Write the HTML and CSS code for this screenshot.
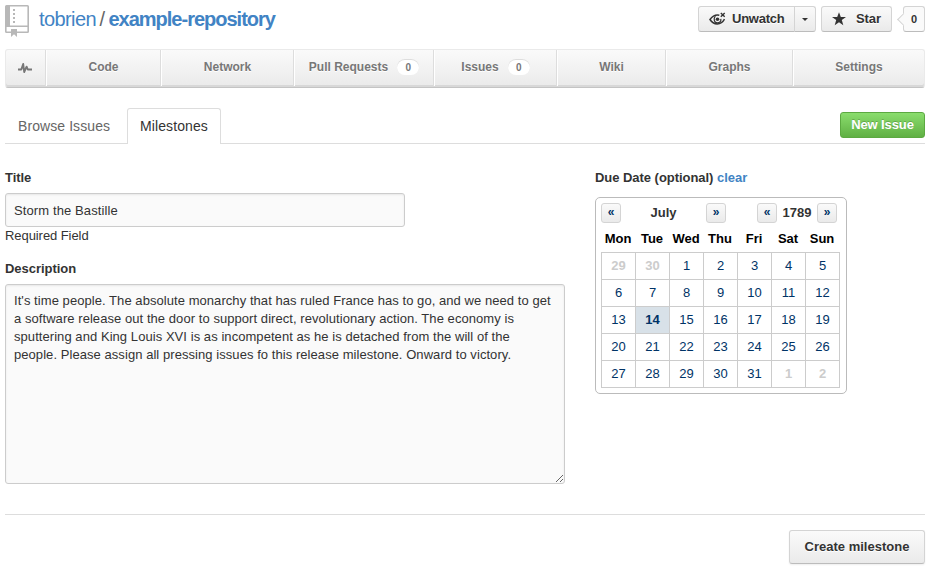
FILE: index.html
```html
<!DOCTYPE html>
<html lang="en">
<head>
<meta charset="utf-8">
<title>tobrien/example-repository</title>
<link rel="stylesheet" href="styles.css">
</head>
<body>
<header class="repohead">
  <svg class="repo-icon" width="24" height="32" viewBox="0 0 24 32">
    <path fill="#b8b8b8" fill-rule="evenodd" d="M1.500 0H22.500Q24 0 24 1.500V26.500Q24 28 22.500 28H12V32L9 29.300L6 32V28H1.500Q0 28 0 26.500V1.500Q0 0 1.500 0ZM5 1.600V20.500H22.400V1.600ZM1.600 22V26.400H6V24H12V26.400H22.400V22Z"/>
    <path fill="#b8b8b8" d="M8 4h2v2H8zM8 8h2v2H8zM8 12h2v2H8zM8 16h2v2H8z"/>
  </svg>
  <h1 class="repo-title"><a class="owner">tobrien</a><span class="slash">/</span><a class="repo">example-repository</a></h1>
  <div class="actions">
    <div class="split">
      <button class="btn unwatch">
        <svg width="17" height="15" viewBox="0 0 17 15"><g fill="none" stroke="#333" stroke-width="1.500"><path d="M10.300 3.300C6.300 2.500 3.200 4.500 1 7.500C4.600 13.300 12 13.500 15.500 7.200"/><path stroke-width="1.200" d="M6.400 4.200C4.200 6.500 5 10.800 8.400 10.800C11 10.800 12.300 8.900 11.800 6.800"/><path stroke-width="1.400" d="M11.800 1.100L15.700 4.700M15.700 1.100L11.800 4.700"/></g><circle cx="8.500" cy="7.200" r="1.800" fill="#333"/></svg>
        <span>Unwatch</span></button>
      <button class="btn caret"><i></i></button>
    </div>
    <button class="btn star">
      <svg width="14" height="14" viewBox="0 0 14 14"><path fill="#333" d="M7 .3L8.800 5H14L9.800 8.100L11.300 13.300L7 10.200L2.700 13.300L4.200 8.100L0 5H5.200Z"/></svg>
      <span>Star</span></button>
    <span class="count">0</span>
  </div>
</header>
<nav class="nav">
  <a class="pulse"><svg width="15" height="12" viewBox="0 0 15 12"><path fill="none" stroke="#777" stroke-width="1.900" stroke-linejoin="round" d="M0 7.500H3.300L5.200 2L6.200 10L8.600 4.700L9.800 7.500H14"/></svg></a>
  <a class="code">Code</a>
  <a class="network">Network</a>
  <a class="pulls">Pull Requests<span class="badge">0</span></a>
  <a class="issues">Issues<span class="badge">0</span></a>
  <a class="wiki">Wiki</a>
  <a class="graphs">Graphs</a>
  <a class="settings">Settings</a>
</nav>
<div class="tabs">
  <a class="tab browse">Browse Issues</a>
  <a class="tab active">Milestones</a>
  <button class="new-issue">New Issue</button>
</div>
<main class="form">
  <div class="fields">
    <label class="label" for="title">Title</label>
    <input class="input" id="title" value="Storm the Bastille">
    <p class="note">Required Field</p>
    <label class="label desc-label" for="desc">Description</label>
    <textarea class="input area" id="desc" spellcheck="false">It's time people. The absolute monarchy that has ruled France has to go, and we need to get
a software release out the door to support direct, revolutionary action. The economy is
sputtering and King Louis XVI is as incompetent as he is detached from the will of the
people. Please assign all pressing issues fo this release milestone. Onward to victory.</textarea>
  </div>
  <div class="due">
    <div class="label due-label">Due Date (optional) <a class="clear">clear</a></div>
    <div class="calendar">
      <div class="cal-head">
        <button class="step">«</button><b class="month">July</b><button class="step">»</button>
        <button class="step prev-year">«</button><b class="year">1789</b><button class="step">»</button>
      </div>
      <div class="weekdays"><b>Mon</b><b>Tue</b><b>Wed</b><b>Thu</b><b>Fri</b><b>Sat</b><b>Sun</b></div>
      <div class="days">
        <span class="out">29</span><span class="out">30</span><span>1</span><span>2</span><span>3</span><span>4</span><span>5</span>
        <span>6</span><span>7</span><span>8</span><span>9</span><span>10</span><span>11</span><span>12</span>
        <span>13</span><span class="selected">14</span><span>15</span><span>16</span><span>17</span><span>18</span><span>19</span>
        <span>20</span><span>21</span><span>22</span><span>23</span><span>24</span><span>25</span><span>26</span>
        <span>27</span><span>28</span><span>29</span><span>30</span><span>31</span><span class="out">1</span><span class="out">2</span>
      </div>
    </div>
  </div>
</main>
<footer class="foot"><button class="btn create">Create milestone</button></footer>
</body>
</html>
```
FILE: styles.css
```css
* { box-sizing: border-box; }
body {
  margin: 0;
  padding: 0 11px 0 5px;
  width: 936px;
  height: 570px;
  overflow: hidden;
  background: #fff;
  color: #333;
  font: 13px/18px "Liberation Sans", Helvetica, Arial, sans-serif;
}
button, input, textarea { font: inherit; color: inherit; margin: 0; }
button { padding: 0; white-space: nowrap; }
.repohead { display: flex; height: 49px; padding-top: 5px; }
.repo-icon { flex: none; }
.repo-title { margin: 0 0 0 10px; font-size: 20px; line-height: 29px; font-weight: 400; letter-spacing: -.6px; white-space: nowrap; }
.repo-title a { color: #4183c4; }
.repo-title .slash { margin: 0 4px 0 3.5px; color: #666; }
.repo-title .repo { font-weight: 700; letter-spacing: -1px; }
.actions { display: flex; margin-left: auto; padding-top: 1px; }
.btn {
  display: flex;
  align-items: center;
  height: 26px;
  border: 1px solid #d4d4d4;
  border-bottom-color: #bcbcbc;
  border-radius: 3px;
  background: linear-gradient(#fafafa, #eaeaea);
  color: #333;
  font-weight: 700;
  text-shadow: 0 1px 0 #fff;
}
.split { display: flex; }
.unwatch { width: 97px; padding-left: 10px; gap: 6px; border-radius: 3px 0 0 3px; letter-spacing: -.25px; }
.unwatch svg, .star svg { flex: none; }
.caret { width: 22px; margin-left: -1px; justify-content: center; border-radius: 0 3px 3px 0; }
.caret i { border: 3px solid transparent; border-top-color: #333; border-bottom: 0; }
.star { width: 71px; margin-left: 5px; padding-left: 10px; gap: 10px; letter-spacing: -.1px; }
.count {
  position: relative;
  width: 22px;
  height: 26px;
  margin-left: 11px;
  border: 1px solid #d4d4d4;
  border-bottom-color: #bcbcbc;
  border-radius: 3px;
  background: #fafafa;
  font-size: 11px;
  font-weight: 700;
  line-height: 24px;
  text-align: center;
}
.count::before {
  content: "";
  position: absolute;
  left: -5px;
  top: 8px;
  width: 8px;
  height: 8px;
  border: solid #d4d4d4;
  border-width: 0 0 1px 1px;
  background: #fafafa;
  transform: rotate(45deg);
}
.nav {
  display: flex;
  height: 39px;
  border: 1px solid #eaeaea;
  border-bottom: 1px solid #c4c4c4;
  border-radius: 3px;
  background: linear-gradient(#fafafa, #eaeaea);
  box-shadow: inset 0 -2px 0 #d8d8d8;
  color: #777;
  font-size: 12px;
  font-weight: 700;
  text-shadow: 0 1px 0 #fff;
}
.nav a {
  display: flex;
  justify-content: center;
  height: 36px;
  padding-top: 8px;
  border-right: 1px solid #ddd;
  border-left: 1px solid #fff;
  white-space: nowrap;
}
.nav a:first-child { border-left: 0; }
.nav a:last-child { border-right: 0; flex: 1; }
.nav .pulse { width: 40px; padding-top: 12px; }
.nav .code { width: 115px; }
.nav .network { width: 133px; }
.nav .pulls { width: 140px; }
.nav .issues { width: 123px; }
.nav .wiki { width: 109px; }
.nav .graphs { width: 127px; }
.badge {
  width: 22px;
  height: 16px;
  margin: 1px 0 0 9px;
  border-radius: 8px;
  background: #fff;
  box-shadow: inset 0 1px 0 #ddd;
  font-size: 10px;
  line-height: 17px;
  text-align: center;
}
.tabs { display: flex; height: 36px; margin-top: 20px; border-bottom: 1px solid #ddd; font-size: 14px; }
.tab { height: 36px; line-height: 36px; white-space: nowrap; }
.browse { width: 122px; padding-left: 13px; color: #666; letter-spacing: .08px; }
.active {
  width: 94px;
  border: 1px solid #ddd;
  border-bottom: 0;
  border-radius: 3px 3px 0 0;
  background: #fff;
  line-height: 34px;
  text-align: center;
  letter-spacing: .1px;
}
.new-issue {
  width: 85px;
  height: 26px;
  margin: 4px 0 0 auto;
  border: 1px solid #5ca941;
  border-radius: 3px;
  background: linear-gradient(#8add6d, #60b044);
  color: #fff;
  font-size: 13px;
  font-weight: 700;
  letter-spacing: -.1px;
  text-shadow: 0 -1px 0 rgba(0, 0, 0, .2);
}
.form { display: flex; height: 370px; padding-top: 24px; }
.fields { width: 590px; }
.label { display: block; height: 25px; font-weight: 700; line-height: 19px; letter-spacing: -.04px; white-space: nowrap; }
.input {
  display: block;
  width: 400px;
  height: 34px;
  padding: 0 8px;
  border: 1px solid #ccc;
  border-radius: 3px;
  outline: 0;
  background: #fafafa;
  box-shadow: inset 0 1px 2px rgba(0, 0, 0, .075);
  letter-spacing: .11px;
}
.note { margin: 0; line-height: 18px; letter-spacing: -.07px; }
.desc-label { height: 25px; margin-top: 14px; }
.area { width: 560px; height: 200px; padding: 7px 8px; resize: both; white-space: pre; overflow: hidden; letter-spacing: .06px; }
.clear { color: #4183c4; }
.due-label { height: 29px; }
.calendar { width: 252px; height: 197px; padding: 5px; border: 1px solid #bbb; border-radius: 5px; }
.cal-head { display: flex; height: 20px; }
.step {
  width: 20px;
  height: 20px;
  border: 1px solid #d4d4d4;
  border-radius: 3px;
  background: linear-gradient(#fafafa, #eaeaea);
  color: #036;
  font-size: 12px;
  font-weight: 700;
  line-height: 16px;
  padding-bottom: 2px;
}
.month { width: 85px; line-height: 20px; text-align: center; }
.prev-year { margin-left: 31px; }
.year { width: 40px; line-height: 20px; text-align: center; }
.weekdays { display: grid; grid-template-columns: repeat(7, 34px); height: 29px; padding-top: 7px; color: #000; text-align: center; }
.days { display: grid; grid-template-columns: repeat(7, 34px); width: 239px; border: solid #ccc; border-width: 1px 0 0 1px; }
.days span { height: 27px; border: solid #ccc; border-width: 0 1px 1px 0; color: #036; line-height: 26px; text-align: center; }
.days .out { color: #ccc; font-weight: 700; }
.days .selected { background: #d8e1e8; font-weight: 700; }
.foot { display: flex; justify-content: flex-end; padding-top: 15px; border-top: 1px solid #ddd; }
.create { width: 136px; height: 34px; justify-content: center; box-shadow: 0 1px 2px rgba(0, 0, 0, .07); }
```
